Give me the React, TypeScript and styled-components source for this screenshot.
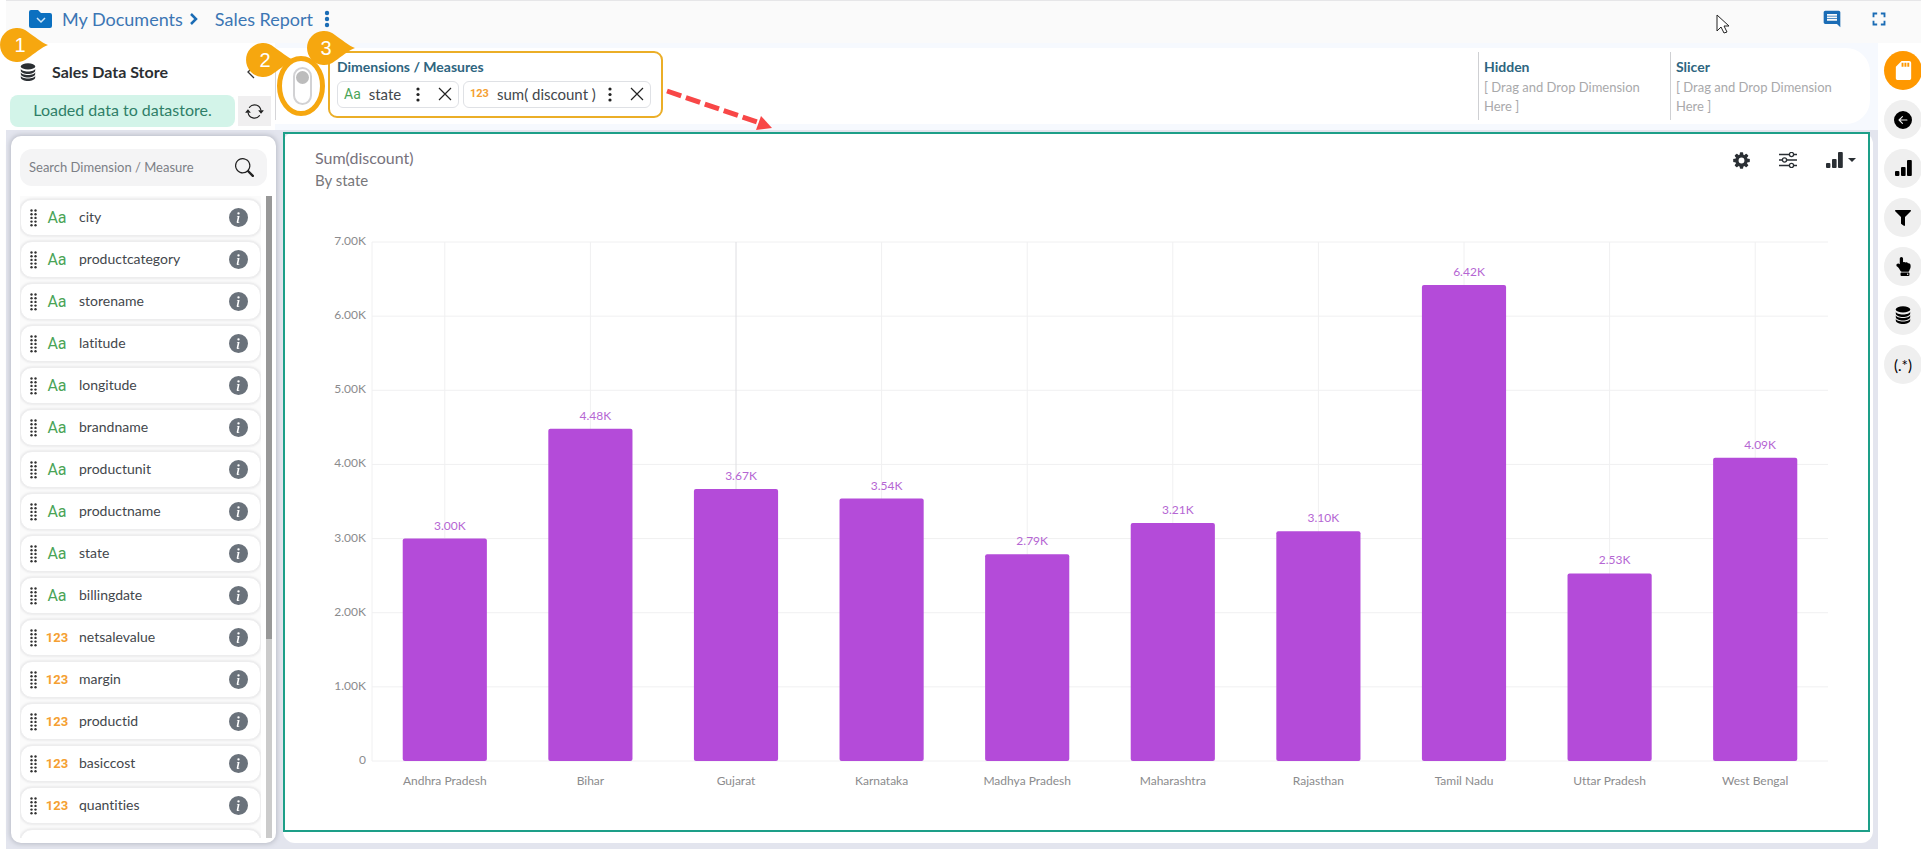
import React from "react";
import styled, { createGlobalStyle } from "styled-components";
import { MdComment, MdFullscreen, MdSdStorage } from "react-icons/md";
import { BsArrowLeftCircleFill, BsSearch, BsInfoCircleFill, BsArrowRepeat } from "react-icons/bs";
import { FaFilter, FaHandPointUp } from "react-icons/fa";

const Global = createGlobalStyle`
  *, *::before, *::after { box-sizing: border-box; }
  body { margin: 0; background: #fff; font-family: Lato, "Noto Sans", sans-serif; font-variant-ligatures: none; color: #43474c; }
  button { font: inherit; color: inherit; border: 0; padding: 0; background: none; cursor: pointer; display: inline-flex; align-items: center; justify-content: center; }
  h1, h2, h3, p, ul { margin: 0; padding: 0; list-style: none; }
`;

const Shell = styled.div`
  position: relative; height: 100vh; min-height: 640px; display: flex; flex-direction: column;
  padding-left: 6px; overflow: hidden;
`;
const TopBar = styled.header`
  display: flex; align-items: center; justify-content: space-between; height: 43px;
  padding: 0 31px 6px 23px; background: #fafafa; border-top: 1px solid #e6e6e8; color: #1a6cb5;
`;
const Crumbs = styled.nav`
  display: flex; align-items: center; font-size: 18px; line-height: 24px;
  a { color: #3c76b4; text-decoration: none; }
`;
const CrumbLink = styled.a`margin: 0 6px 0 10px;`;
const ReportLink = styled.a`margin: 0 11px 0 16px;`;
const TopActions = styled.div`display: flex; align-items: center; gap: 26px;`;

const Body = styled.div`flex: 1; min-height: 0; display: flex;`;
const Work = styled.div`flex: 1; min-width: 0; display: flex; flex-direction: column; background: #e3e5ee;`;
const Strip = styled.div`display: flex; height: 87px; background: #f6f9fe;`;
const StoreHead = styled.div`
  width: 269px; background: #fff; padding: 9px 4px 3px; display: flex; flex-direction: column; justify-content: space-between;
`;
const StoreTitle = styled.div`
  display: flex; align-items: center; height: 40px; padding: 0 16px 0 10px; gap: 16px; color: #2b2f33;
  h2 { flex: 1; font-size: 16px; line-height: 20px; font-weight: 700; }
`;
const StoreStatus = styled.div`display: flex; align-items: center; gap: 3px;`;
const Loaded = styled.p`
  flex: 1; height: 32px; border-radius: 8px; background: #d3f4e9; color: #2f7f68; text-align: center;
  font-size: 16px; line-height: 29px;
`;
const RefreshButton = styled.button`&& { width: 33px; height: 30px; background: #f0eff0; color: #222; }`;
const Fields = styled.div`
  flex: 1; min-width: 0; display: flex; margin: 5px 8px 6px 0; padding-right: 8px; background: #fff; border-radius: 0 24px 24px 0;
`;
const ToggleSlot = styled.div`
  width: 53px; display: flex; justify-content: center; align-items: center; margin: 4px 0; border-left: 1px solid #d5d5d8;
`;
const Toggle = styled.input`
  appearance: none; margin: 0; width: 19px; height: 38px; border: 2px solid #d2d2d4; border-radius: 10px; background: #fff;
  padding: 2px 1px;
  &::before { content: ""; display: block; width: 13px; height: 13px; border-radius: 50%; background: #bcbcbc; }
`;
const DimBox = styled.section`
  width: 335px; height: 67px; margin-top: 3px; border: 2px solid #ebae27; border-radius: 9px; padding: 4px 7px;
`;
const FieldTitle = styled.h3`font-size: 14px; line-height: 19px; font-weight: 700; color: #2e6580;`;
const Chips = styled.div`display: flex; gap: 4px; margin-top: 5px;`;
const Chip = styled.div<{ $w: number }>`
  display: flex; align-items: center; width: ${(p) => p.$w}px; height: 27px; border: 1px solid #dfe1e5; border-radius: 6px;
  padding: 0 6px 1px; font-size: 15px; line-height: 20px;
`;
const ChipName = styled.span`flex: 1; margin-left: 8px; white-space: pre;`;
const ChipActions = styled.span`display: flex; align-items: center; gap: 18px; color: #222;`;
const Kind = styled.span<{ $num?: boolean; $size?: number }>`
  color: ${(p) => (p.$num ? "#f59f33" : "#4aa457")}; font-size: ${(p) => p.$size ?? 16}px;
  font-weight: ${(p) => (p.$num ? 700 : 400)}; font-family: Roboto, "Liberation Sans", sans-serif;
`;
const Spacer = styled.div`flex: 1;`;
const DropZone = styled.section`
  width: 192px; margin: 4px 0; padding: 5px 18px 0 5px; border-left: 1px solid #cfd0d3;
  p { margin-top: 2px; font-size: 13px; line-height: 19px; color: #a9a9ab; }
`;

const Panels = styled.div`flex: 1; min-height: 0; display: flex; gap: 7px; padding: 2px 5px 6px;`;
const SidePanel = styled.aside`
  width: 265px; margin-top: 4px; background: #fff; border-radius: 10px; box-shadow: 0 0 5px 1px #b9bcc6;
  padding: 13px 4px 5px 9px; display: flex; flex-direction: column;
`;
const Search = styled.label`
  display: flex; align-items: center; height: 37px; margin-right: 5px; padding: 0 13px 1px 9px; border-radius: 12px; background: #f4f4f5; color: #222;
  input { flex: 1; min-width: 0; border: 0; padding: 0; outline: 0; background: none; font: 13px/18px Lato, sans-serif; color: #444; }
  input::placeholder { color: #7c7f86; opacity: 1; }
`;
const ListArea = styled.div`flex: 1; min-height: 0; display: flex; gap: 5px; margin-top: 10px;`;
const List = styled.ul`
  flex: 1; overflow-y: auto; scrollbar-width: none; display: flex; flex-direction: column; gap: 5px; && { padding: 3px 0 0 0; }
  background: #fbfbfb;
`;
const Item = styled.li`
  flex: none; display: flex; align-items: center; height: 37px; padding: 0 12px 0 9px; background: #fff; border-radius: 12px;
  border: 1px solid #ededee; box-shadow: 0 0 3px #dcdcde;
`;
const KindSlot = styled.span`width: 40px; display: flex; justify-content: center;`;
const ItemName = styled.span`flex: 1; margin-left: 2px; font-size: 14px; line-height: 20px; padding-bottom: 1px;`;
const InfoButton = styled.button`&& { color: #6a727b; }`;
const Rail = styled.div`width: 6px; background: #cbcbcb;`;
const Thumb = styled.div`height: 69%; background: #989898;`;

const ChartCard = styled.main`
  flex: 1; min-width: 0; display: flex; background: #fff; border-radius: 12px; padding: 0 3px 11px 0;
`;
const ChartFrame = styled.section`
  flex: 1; min-width: 0; border: 2px solid #1d9f88; padding: 13px 12px 0 30px; display: flex; flex-direction: column;
`;
const ChartHead = styled.div`
  display: flex; justify-content: space-between; align-items: flex-start; height: 44px;
  h1 { font-size: 16px; line-height: 22px; font-weight: 400; color: #77727c; }
  p { font-size: 15px; line-height: 22px; color: #77777a; }
`;
const Tools = styled.div`display: flex; align-items: center; gap: 29px; height: 26px; color: #2a2f34;`;
const ChartTypeButton = styled.button`&& { gap: 5px; }`;
const Plot = styled.svg`
  flex: 1; min-height: 0; width: auto; margin: 51px 28px 69px 57px; overflow: visible;
  font-family: Lato, "Noto Sans", sans-serif; font-size: 12px; fill: #8b8b8d;
`;
const RightRail = styled.aside`
  width: 43px; background: #fff; padding: 8px 0 0 6px; display: flex; flex-direction: column; gap: 10px;
`;
const RailButton = styled.button<{ $active?: boolean }>`
  && { width: 38px; height: 39px; border-radius: 50%; background: ${(p) => (p.$active ? "#ff9800" : "#efefef")};
  color: ${(p) => (p.$active ? "#fff" : "#000")}; flex: none; font-size: 15px; }
`;
const Overlay = styled.svg`position: absolute; left: 0; top: 0; pointer-events: none; font: 20px "Liberation Sans", sans-serif; fill: #fff;`;
const Cursor = styled.svg`position: absolute; right: 191px; top: 14px; pointer-events: none;`;

const fields: [string, boolean][] = [
  ["city", false], ["productcategory", false], ["storename", false], ["latitude", false], ["longitude", false],
  ["brandname", false], ["productunit", false], ["productname", false], ["state", false], ["billingdate", false],
  ["netsalevalue", true], ["margin", true], ["productid", true], ["basiccost", true], ["quantities", true],
];
const data: [string, number][] = [
  ["Andhra Pradesh", 3.0], ["Bihar", 4.48], ["Gujarat", 3.67], ["Karnataka", 3.54], ["Madhya Pradesh", 2.79],
  ["Maharashtra", 3.21], ["Rajasthan", 3.1], ["Tamil Nadu", 6.42], ["Uttar Pradesh", 2.53], ["West Bengal", 4.09],
];

const Grip = () => (
  <svg width="7" height="18" fill="#333">
    {[0, 1, 2, 3, 4].flatMap((r) => [1.5, 5.5].map((x) => <circle key={`${r}-${x}`} cx={x} cy={1.5 + r * 3.7} r="1.2" />))}
  </svg>
);
const SignalIcon = () => (
  <svg width="17" height="17" viewBox="0 0 17 17" fill="currentColor">
    <rect x="0" y="11" width="4.4" height="5" rx="1" />
    <rect x="6" y="7" width="4.6" height="9" rx="1" />
    <rect x="12" y="0" width="4.8" height="16" rx="1" />
  </svg>
);
const StackIcon = () => (
  <svg width="16" height="19" viewBox="0 0 16 19">
    <ellipse cx="8" cy="3.4" rx="7.2" ry="3.1" fill="currentColor" />
    {[5.6, 9.1, 12.6].map((y) => (
      <path key={y} d={`M.8 ${y}c0 4 14.4 4 14.4 0v1.9c0 4.6-14.4 4.6-14.4 0z`} fill="currentColor" />
    ))}
  </svg>
);
const GearIcon = () => (
  <svg width="17" height="17" viewBox="-9 -9 18 18">
    <circle r="4.9" fill="none" stroke="currentColor" strokeWidth="3.6" />
    {[0, 45, 90, 135, 180, 225, 270, 315].map((a) => (
      <rect key={a} x="-1.8" y="-8.8" width="3.6" height="3.2" rx=".8" fill="currentColor" transform={`rotate(${a})`} />
    ))}
  </svg>
);
const SlidersIcon = () => (
  <svg width="18" height="16" viewBox="0 0 18 16" fill="none" stroke="currentColor" strokeWidth="1.3">
    <path d="M0 2.5h10M15 2.5h3M0 8h3M8 8h10M0 13.5h10M15 13.5h3" />
    <circle cx="12.5" cy="2.5" r="2.1" /><circle cx="5.5" cy="8" r="2.1" /><circle cx="12.5" cy="13.5" r="2.1" />
  </svg>
);
const KebabIcon = () => (
  <svg width="4" height="15" fill="currentColor"><circle cx="2" cy="2" r="1.6" /><circle cx="2" cy="7.5" r="1.6" /><circle cx="2" cy="13" r="1.6" /></svg>
);
const CrossIcon = () => (
  <svg width="14" height="14"><path d="M1 1l12 12M13 1L1 13" stroke="currentColor" strokeWidth="1.2" /></svg>
);

const BarChart = () => (
  <Plot role="img" aria-label="Sum of discount by state">
    {[0, 1, 2, 3, 4, 5, 6, 7].map((v) => {
      const y = `${100 - (v / 7) * 100}%`;
      return (
        <g key={v}>
          <line x1="0" x2="100%" y1={y} y2={y} stroke="#f0f0f1" />
          <text x="-6" y={y} dy="3" textAnchor="end">{v ? `${v}.00K` : "0"}</text>
        </g>
      );
    })}
    <line x1="0" x2="0" y1="0" y2="100%" stroke="#f0f0f1" />
    {data.map(([name, v], i) => {
      const x = `${i * 10 + 5}%`;
      const top = `${100 - (v / 7) * 100}%`;
      return (
        <g key={name}>
          <line x1={x} x2={x} y1="0" y2="100%" stroke={i === 2 ? "#dedee2" : "#f0f0f1"} />
          <rect x={`${i * 10 + 2.11}%`} y={top} width="5.78%" height={`${(v / 7) * 100}%`} rx="2" fill="#b44bd9" />
          <text x={x} y={top} dx="5" dy="-9" textAnchor="middle" fill="#b566d3">{v.toFixed(2)}K</text>
          <text x={x} y="100%" dy="24" textAnchor="middle">{name}</text>
        </g>
      );
    })}
  </Plot>
);

const Callouts = () => (
  <Overlay width="800" height="140" aria-hidden="true">
    <ellipse cx="301" cy="86" rx="21.5" ry="27.5" fill="none" stroke="#f6a70f" strokeWidth="5" />
    <path d="M48 45 C42 47 34 54 28 58 A17 17 0 1 1 28 32 C34 36 42 43 48 45Z" fill="#f6a70f" />
    <path d="M294 60 C288 62 280 69 274 73 A17 17 0 1 1 274 47 C280 51 288 58 294 60Z" fill="#f6a70f" />
    <path d="M355 48 C349 50 341 57 335 61 A17 17 0 1 1 335 35 C341 39 349 46 355 48Z" fill="#f6a70f" />
    <text x="20" y="52" textAnchor="middle">1</text>
    <text x="265" y="67" textAnchor="middle">2</text>
    <text x="326" y="55" textAnchor="middle">3</text>
    <path d="M667 91 L757 122" stroke="#f84747" strokeWidth="5" strokeDasharray="15 5" />
    <path d="M761 116 L772 128 L756 130 Z" fill="#f84747" />
  </Overlay>
);

export default function App() {
  return (
    <>
      <Global />
      <Shell>
        <TopBar>
          <Crumbs aria-label="Breadcrumb">
            <svg width="23" height="18" viewBox="0 0 23 18">
              <path d="M2 0h7l3 3h9a2 2 0 0 1 2 2v11a2 2 0 0 1-2 2H2a2 2 0 0 1-2-2V2a2 2 0 0 1 2-2z" fill="#0b70c0" />
              <path d="M8 8l4 4 4-4" fill="none" stroke="#cfe6f7" strokeWidth="1.5" />
            </svg>
            <CrumbLink href="#documents">My Documents</CrumbLink>
            <svg width="10" height="14" viewBox="0 0 10 14">
              <path d="M2 2l5 5-5 5" fill="none" stroke="#1a6cb5" strokeWidth="2.5" />
            </svg>
            <ReportLink href="#report">Sales Report</ReportLink>
            <button aria-label="Report menu">
              <svg width="6" height="18" fill="#1a6cb5"><circle cx="3" cy="3" r="2.2" /><circle cx="3" cy="9" r="2.2" /><circle cx="3" cy="15" r="2.2" /></svg>
            </button>
          </Crumbs>
          <TopActions>
            <button aria-label="Comments"><MdComment size={20} /></button>
            <button aria-label="Full screen"><MdFullscreen size={22} /></button>
          </TopActions>
        </TopBar>
        <Body>
          <Work>
            <Strip>
              <StoreHead>
                <StoreTitle>
                  <StackIcon />
                  <h2>Sales Data Store</h2>
                  <button aria-label="Collapse"><svg width="9" height="14"><path d="M8 1L2 7l6 6" fill="none" stroke="#333" strokeWidth="1.3" /></svg></button>
                </StoreTitle>
                <StoreStatus>
                  <Loaded>Loaded data to datastore.</Loaded>
                  <RefreshButton aria-label="Refresh"><BsArrowRepeat size={19} /></RefreshButton>
                </StoreStatus>
              </StoreHead>
              <Fields>
                <ToggleSlot><Toggle type="checkbox" aria-label="Auto refresh" /></ToggleSlot>
                <DimBox>
                  <FieldTitle>Dimensions / Measures</FieldTitle>
                  <Chips>
                    <Chip $w={122}>
                      <Kind $size={14}>Aa</Kind><ChipName>state</ChipName>
                      <ChipActions>
                        <button aria-label="state options"><KebabIcon /></button>
                        <button aria-label="Remove state"><CrossIcon /></button>
                      </ChipActions>
                    </Chip>
                    <Chip $w={188}>
                      <Kind $num $size={11}>123</Kind><ChipName>sum( discount )</ChipName>
                      <ChipActions>
                        <button aria-label="discount options"><KebabIcon /></button>
                        <button aria-label="Remove discount"><CrossIcon /></button>
                      </ChipActions>
                    </Chip>
                  </Chips>
                </DimBox>
                <Spacer />
                <DropZone><FieldTitle>Hidden</FieldTitle><p>[ Drag and Drop Dimension Here ]</p></DropZone>
                <DropZone><FieldTitle>Slicer</FieldTitle><p>[ Drag and Drop Dimension Here ]</p></DropZone>
              </Fields>
            </Strip>
            <Panels>
              <SidePanel>
                <Search><input aria-label="Search fields" placeholder="Search Dimension / Measure" /><BsSearch size={19} /></Search>
                <ListArea>
                  <List>
                    {fields.map(([name, num]) => (
                      <Item key={name}>
                        <Grip />
                        <KindSlot><Kind $num={num} $size={num ? 13 : 16}>{num ? "123" : "Aa"}</Kind></KindSlot>
                        <ItemName>{name}</ItemName>
                        <InfoButton aria-label={`About ${name}`}><BsInfoCircleFill size={19} /></InfoButton>
                      </Item>
                    ))}
                    <Item aria-hidden="true">
                      <Grip />
                      <ItemName />
                      <BsInfoCircleFill size={19} color="#6a727b" />
                    </Item>
                  </List>
                  <Rail><Thumb /></Rail>
                </ListArea>
              </SidePanel>
              <ChartCard>
                <ChartFrame>
                  <ChartHead>
                    <div><h1>Sum(discount)</h1><p>By state</p></div>
                    <Tools>
                      <button aria-label="Settings"><GearIcon /></button>
                      <button aria-label="Properties"><SlidersIcon /></button>
                      <ChartTypeButton aria-label="Chart type">
                        <SignalIcon />
                        <svg width="8" height="4" fill="currentColor"><path d="M0 0h8L4 4z" /></svg>
                      </ChartTypeButton>
                    </Tools>
                  </ChartHead>
                  <BarChart />
                </ChartFrame>
              </ChartCard>
            </Panels>
          </Work>
          <RightRail>
            <RailButton $active aria-label="Store"><MdSdStorage size={23} /></RailButton>
            <RailButton aria-label="Back"><BsArrowLeftCircleFill size={18} /></RailButton>
            <RailButton aria-label="Charts"><SignalIcon /></RailButton>
            <RailButton aria-label="Filters"><FaFilter size={16} /></RailButton>
            <RailButton aria-label="Interaction"><FaHandPointUp size={19} /></RailButton>
            <RailButton aria-label="Data stores"><StackIcon /></RailButton>
            <RailButton aria-label="Expressions">(.*)</RailButton>
          </RightRail>
        </Body>
        <Callouts />
        <Cursor width="14" height="21" viewBox="0 0 14 21"><path d="M1 1v16l4-4 3 6 3-1-3-6h5z" fill="#fff" stroke="#222" /></Cursor>
      </Shell>
    </>
  );
}
